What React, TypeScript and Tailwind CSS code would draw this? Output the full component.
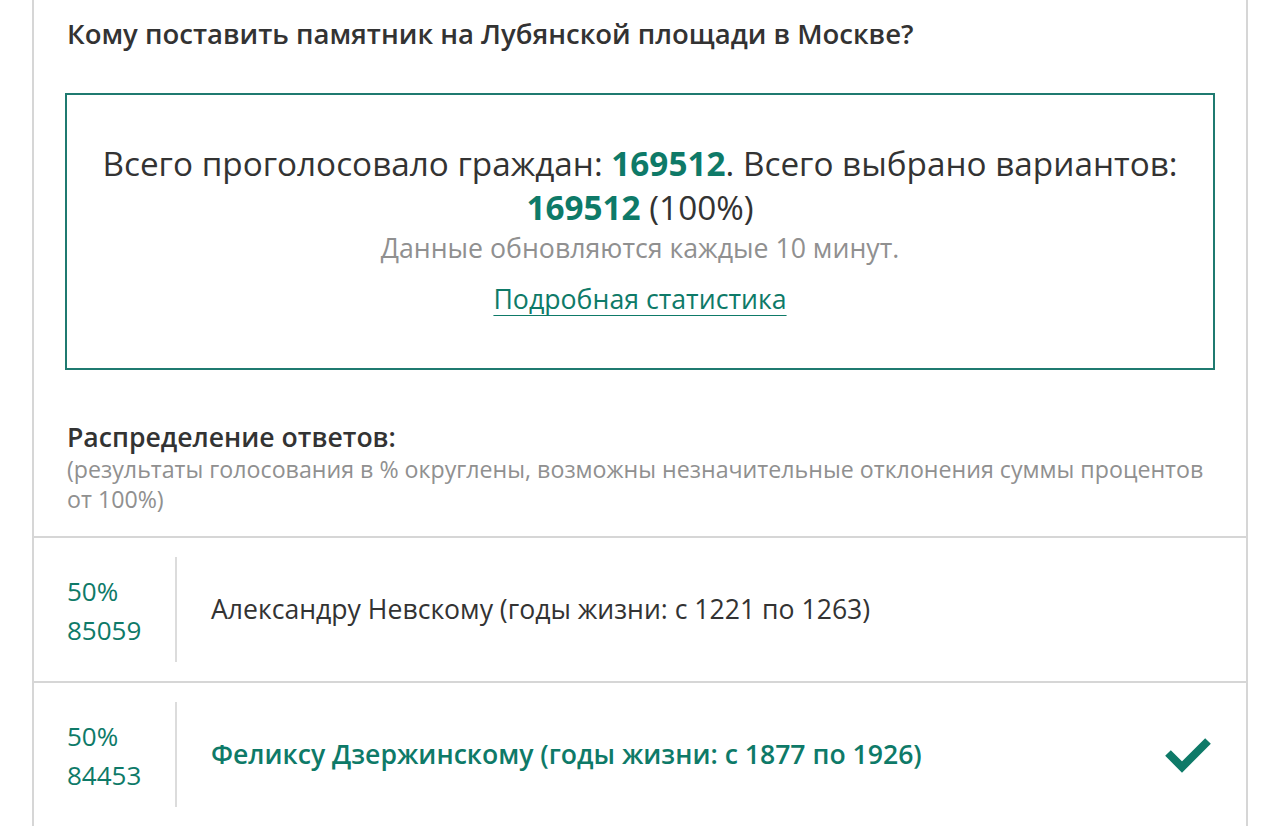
import React from "react";

export default function App() {
  const teal = "text-[#0e7a68]";
  return (
    <div className="w-[1280px] h-[826px] overflow-hidden bg-white" style={{ fontFamily: '"Open Sans", "Noto Sans", sans-serif' }}>
      <div className="mx-[32px] w-[1216px] border-x-2 border-[#d6d6d6] min-h-[826px]">
        <div className="px-[33px] pt-[15px]">
          <h1 className="text-[27.5px] leading-[38px] font-semibold text-[#333333] whitespace-nowrap">Кому поставить памятник на Лубянской площади в Москве?</h1>
          <div className="-mx-[2px] mt-[40px] h-[277px] border-2 border-[#1f7a70] flex flex-col items-center pt-[46px] text-center">
            <p className="text-[33.3px] leading-[44px] text-[#333333] whitespace-nowrap">
              Всего проголосовало граждан: <b className={`font-bold ${teal}`}>169512</b>. Всего выбрано вариантов:
              <br />
              <b className={`font-bold ${teal}`}>169512</b> (100%)
            </p>
            <p className="text-[26.7px] leading-[34px] mt-[2px] text-[#909090]">Данные обновляются каждые 10 минут.</p>
            <a className={`mt-[17px] text-[26.7px] leading-[34px] underline underline-offset-[6px] decoration-1 ${teal}`}>Подробная статистика</a>
          </div>
          <h2 className="mt-[50px] text-[26.6px] leading-[34px] font-semibold text-[#333333]">Распределение ответов:</h2>
          <p className="text-[23.2px] leading-[30px] text-[#909090] pb-[22px]">(результаты голосования в % округлены, возможны незначительные отклонения суммы процентов от 100%)</p>
        </div>
        <div className="border-t-2 border-[#d6d6d6]">
          <Row pct="50%" count="85059" text="Александру Невскому (годы жизни: с 1221 по 1263)" />
        </div>
        <div className="border-t-2 border-[#d6d6d6]">
          <Row pct="50%" count="84453" text="Феликсу Дзержинскому (годы жизни: с 1877 по 1926)" selected />
        </div>
      </div>
    </div>
  );
}

function Row({ pct, count, text, selected }: { pct: string; count: string; text: string; selected?: boolean }) {
  return (
    <div className="flex items-stretch h-[143px] py-[19px] pl-[33px] pr-[34px]">
      <div className="w-[110px] flex flex-col justify-center pt-[3px] text-[26px] leading-[39px] text-[#0e7a68] border-r-2 border-[#dcdcdc]">
        <span>{pct}</span>
        <span>{count}</span>
      </div>
      <div className="flex-1 flex items-center pl-[34px]">
        <span className={selected ? "text-[26.6px] font-semibold text-[#0e7a68]" : "text-[26.6px] text-[#333333]"}>{text}</span>
      </div>
      {selected && (
        <div className="flex items-center">
          <svg width="48" height="36" viewBox="0 0 48 36">
            <path d="M4 16 L18 30 L44 4" fill="none" stroke="#0e7a68" strokeWidth="8" strokeLinecap="butt" strokeLinejoin="miter" />
          </svg>
        </div>
      )}
    </div>
  );
}
